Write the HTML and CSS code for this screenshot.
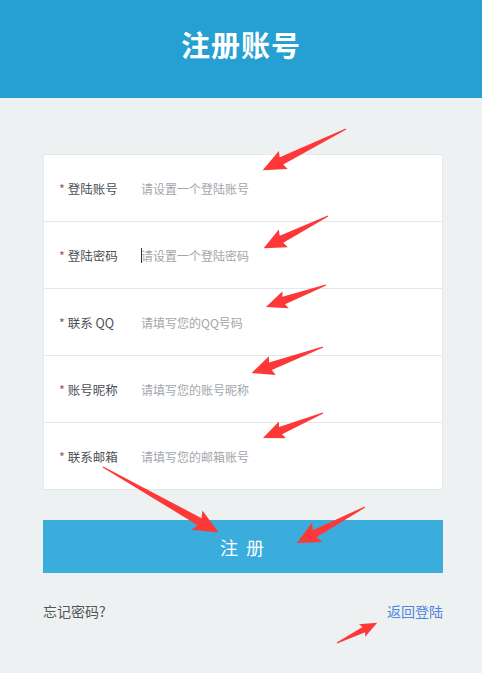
FILE: index.html
```html
<!DOCTYPE html>
<html lang="zh-CN">
<head>
    <meta charset="UTF-8">
    <meta name="viewport" content="width=device-width, initial-scale=1.0">
    <title>注册账号</title>
    <link rel="stylesheet" href="styles.css">
</head>
<body>
    <header class="top-bar">
        <h1>注册账号</h1>
    </header>

    <main class="register">
        <form class="form-card">
            <div class="form-row">
                <label class="form-label"><span class="req">*</span> 登陆账号</label>
                <input class="form-input" type="text" placeholder="请设置一个登陆账号">
            </div>
            <div class="form-row">
                <label class="form-label"><span class="req">*</span> 登陆密码</label>
                <span class="caret"></span>
                <input class="form-input" type="password" placeholder="请设置一个登陆密码">
            </div>
            <div class="form-row">
                <label class="form-label"><span class="req">*</span> 联系 QQ</label>
                <input class="form-input" type="text" placeholder="请填写您的QQ号码">
            </div>
            <div class="form-row">
                <label class="form-label"><span class="req">*</span> 账号昵称</label>
                <input class="form-input" type="text" placeholder="请填写您的账号昵称">
            </div>
            <div class="form-row">
                <label class="form-label"><span class="req">*</span> 联系邮箱</label>
                <input class="form-input" type="text" placeholder="请填写您的邮箱账号">
            </div>
        </form>

        <button class="submit-btn" type="button">注 册</button>

        <div class="links">
            <a class="link-forgot" href="#">忘记密码?</a>
            <a class="link-back" href="#">返回登陆</a>
        </div>
    </main>

    <!-- red annotation arrows drawn over the page -->
    <svg class="marks" width="482" height="673" viewBox="0 0 482 673">
        <g fill="#fe3838">
            <polygon transform="translate(346 129) rotate(153.7)" points="0,-0.6 72,-4 70,-10 93,0 70,10 72,4 0,0.6"/>
            <polygon transform="translate(328 216) rotate(153.4)" points="0,-0.6 52,-4 50,-10 72,0 50,10 52,4 0,0.6"/>
            <polygon transform="translate(326 285) rotate(159.9)" points="0,-0.6 45,-4 43,-9 64,0 43,9 45,4 0,0.6"/>
            <polygon transform="translate(323 347) rotate(159.9)" points="0,-0.6 56,-4 54,-10 76,0 54,10 56,4 0,0.6"/>
            <polygon transform="translate(323 413) rotate(157.4)" points="0,-0.6 46,-4 44,-9 65,0 44,9 46,4 0,0.6"/>
            <polygon transform="translate(103 467) rotate(29.5)" points="0,-0.6 111,-4 108,-11 133,0 108,11 111,4 0,0.6"/>
            <polygon transform="translate(365 507) rotate(152.1)" points="0,-0.6 57,-4 54,-11 77,0 54,11 57,4 0,0.6"/>
            <polygon transform="translate(337 643) rotate(-26.6)" points="0,-0.5 30,-3 28,-7 45,0 28,7 30,3 0,0.5"/>
        </g>
    </svg>
</body>
</html>
```

FILE: styles.css
```css
* {
    box-sizing: border-box;
}

body {
    margin: 0;
    background: #eef1f2;
    font-family: "Noto Sans CJK SC", "Noto Sans", sans-serif;
    position: relative;
    min-height: 673px;
}

.top-bar {
    height: 98px;
    background: #26a0d3;
    display: flex;
    align-items: center;
    justify-content: center;
}

.top-bar h1 {
    margin: 0;
    color: #fff;
    font-size: 29px;
    font-weight: 700;
    letter-spacing: 1px;
    padding-bottom: 10px;
}

.register {
    padding: 56px 39px 0 43px;
}

.form-card {
    margin: 0;
    background: #fff;
    border: 1px solid #e4e8ea;
}

.form-row {
    height: 67px;
    display: flex;
    align-items: center;
    padding: 0 0 0 15px;
    border-bottom: 1px solid #e4e8ea;
    position: relative;
}

.form-row:last-child {
    height: 66px;
    border-bottom: none;
}

.form-label {
    width: 82px;
    flex-shrink: 0;
    font-size: 12.5px;
    color: #4a4f55;
}

.req {
    color: #9a5050;
}

.form-input {
    flex: 1;
    border: none;
    outline: none;
    background: transparent;
    font-family: inherit;
    font-size: 12px;
    color: #333;
    padding: 0;
}

.form-input::placeholder {
    color: #a2a6aa;
}

.caret {
    position: absolute;
    left: 97px;
    top: 26px;
    width: 1px;
    height: 15px;
    background: #333;
}

.submit-btn {
    display: block;
    width: 100%;
    height: 53px;
    margin-top: 30px;
    border: none;
    background: #3aaddd;
    color: #fff;
    font-family: inherit;
    font-size: 18px;
    letter-spacing: 2px;
    cursor: pointer;
}

.links {
    display: flex;
    justify-content: space-between;
    margin-top: 28px;
    font-size: 14px;
}

.link-forgot {
    color: #555;
    text-decoration: none;
}

.link-back {
    color: #4f85dc;
    text-decoration: none;
}

.marks {
    position: absolute;
    left: 0;
    top: 0;
    pointer-events: none;
}
```
